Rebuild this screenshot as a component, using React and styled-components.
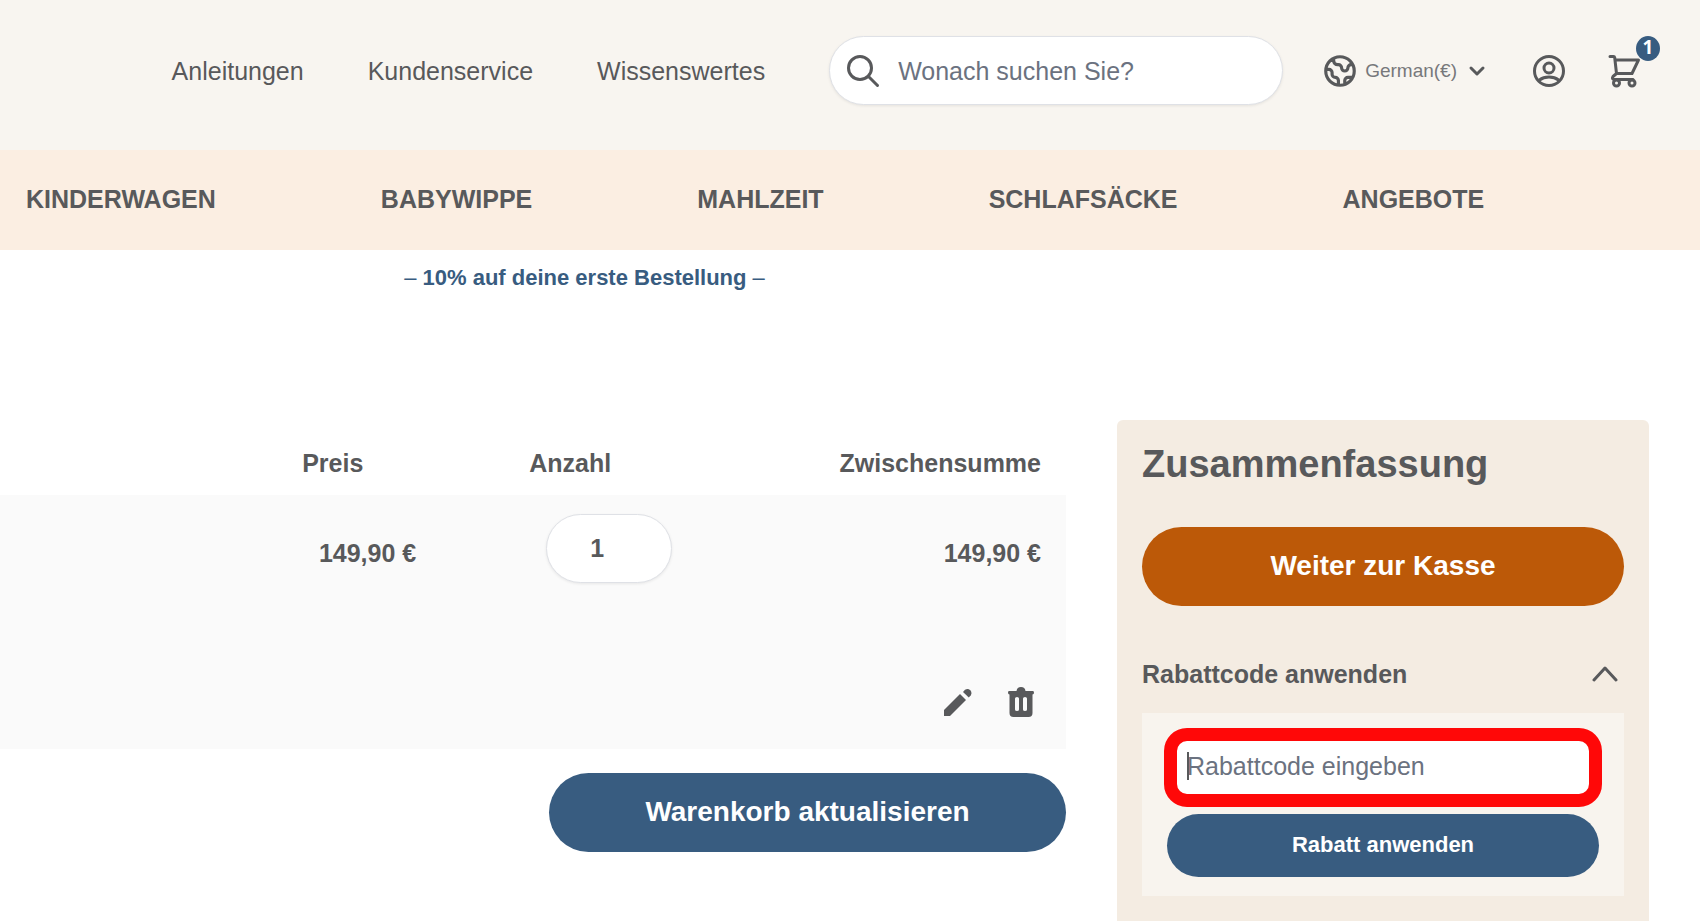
import React from 'react';
import styled, { createGlobalStyle } from 'styled-components';

const color = {
  ink: '#58595b',
  blue: '#385c80',
  orange: '#bc5908',
  placeholder: '#6b7280',
  line: '#dfe1e6',
};

const GlobalStyle = createGlobalStyle`
  *, *::before, *::after { box-sizing: border-box; }
  body {
    margin: 0;
    background: #fff;
    color: ${color.ink};
    font: 400 25px/36px "Liberation Sans", Arial, sans-serif;
  }
  button, input { font: inherit; color: inherit; }
  a { color: inherit; text-decoration: none; }
`;

const Page = styled.div`
  min-height: 100vh;
  display: flex;
  flex-direction: column;
  overflow-x: hidden;
`;

const TopBar = styled.header`
  display: flex;
  align-items: center;
  justify-content: flex-end;
  height: 150px;
  padding: 0 56px 9px 24px;
  background: #f8f5f0;
`;

const ServiceNav = styled.nav`
  display: flex;
  gap: 64px;
  margin-right: 64px;
`;

const SearchBox = styled.label`
  display: flex;
  align-items: center;
  gap: 18px;
  flex: 0 1 454px;
  height: 69px;
  padding: 0 24px 0 16px;
  margin-right: 38px;
  background: #fff;
  border: 1px solid ${color.line};
  border-radius: 35px;
  box-shadow: 0 1px 3px rgba(0, 0, 0, 0.08);
`;

const SearchInput = styled.input`
  flex: 1;
  min-width: 0;
  padding: 0;
  border: 0;
  outline: 0;
  background: transparent;
  &::placeholder { color: ${color.placeholder}; opacity: 1; }
`;

const BareButton = styled.button`
  display: flex;
  align-items: center;
  padding: 0;
  border: 0;
  background: none;
  cursor: pointer;
`;

const LanguageButton = styled(BareButton)`
  gap: 6px;
  margin-right: 41px;
  color: #77787b;
  font-size: 19px;
  svg { color: ${color.ink}; }
  svg:last-child { margin-left: 2px; }
`;

const CartButton = styled(BareButton)`
  position: relative;
  margin-left: 38px;
`;

const Badge = styled.span`
  position: absolute;
  top: -16px;
  right: -16px;
  width: 24px;
  height: 25px;
  border-radius: 50%;
  background: ${color.blue};
  color: #fff;
  font: 700 19px/23px "Open Sans", sans-serif;
  text-align: center;
`;

const CategoryNav = styled.nav`
  display: flex;
  align-items: center;
  gap: 165px;
  height: 100px;
  padding: 0 26px 2px;
  background: #fbeee2;
  font-weight: 700;
  text-transform: uppercase;
`;

const Promo = styled.p`
  width: 69%;
  margin: 10px 0 0;
  padding-right: 4px;
  color: ${color.blue};
  font-size: 22px;
  text-align: center;
`;

const Main = styled.main`
  flex: 1;
  display: flex;
  gap: 51px;
  margin-top: 124px;
  padding-right: 51px;
`;

const Cart = styled.section`
  flex: 1;
  display: flex;
  flex-direction: column;
  align-items: flex-end;
  padding-top: 8px;
`;

const CartTable = styled.table`
  width: 100%;
  table-layout: fixed;
  border-collapse: collapse;
  font-weight: 700;
  margin-bottom: 24px;
  th, td { padding: 0 25px; }
  th { height: 67px; padding-top: 2px; text-align: left; }
  tbody tr { background: #fafafa; }
`;

const Col = styled.col`
  width: ${(p) => p.$width};
`;

const HeadEnd = styled.th`
  &&& { text-align: right; }
`;

const Amount = styled.td`
  height: 138px;
  vertical-align: top;
  text-align: right;
  &&& { padding-top: 40px; padding-right: ${(p) => p.$end || '25px'}; }
`;

const QuantityCell = styled.td`
  vertical-align: top;
  &&& { padding: 19px 0 0 42px; }
`;

const Quantity = styled.input`
  display: block;
  width: 126px;
  height: 69px;
  padding: 0 24px 0 0;
  border: 1px solid ${color.line};
  border-radius: 35px;
  background: #fff;
  box-shadow: 0 1px 3px rgba(0, 0, 0, 0.08);
  text-align: center;
`;

const ActionsCell = styled.td`
  height: 116px;
  vertical-align: top;
`;

const Actions = styled.div`
  display: flex;
  justify-content: flex-end;
  gap: 36px;
  padding: 54px 7px 0 0;
`;

const PillButton = styled.button`
  width: ${(p) => p.$width || '100%'};
  height: ${(p) => (p.$small ? '63px' : '79px')};
  padding: 0 0 2px;
  border: 0;
  border-radius: 40px;
  background: ${(p) => (p.$primary ? color.orange : color.blue)};
  color: #fff;
  font-size: ${(p) => (p.$small ? '22px' : '28px')};
  font-weight: 700;
  cursor: pointer;
`;

const Summary = styled.aside`
  flex: 0 0 532px;
  padding: 22px 25px;
  border-radius: 6px 6px 0 0;
  background: #f4ece2;
`;

const SummaryTitle = styled.h2`
  margin: 0 0 41px;
  font-size: 38px;
  line-height: 44px;
`;

const CouponToggle = styled(BareButton)`
  justify-content: space-between;
  width: 100%;
  margin: 50px 0 21px;
  padding-right: 6px;
  font-weight: 700;
`;

const CouponPanel = styled.form`
  padding: 20px 25px 19px;
  background: #f8f4ee;
`;

const CouponField = styled.div`
  position: relative;
  margin-bottom: 12px;
`;

const CouponInput = styled.input`
  display: block;
  width: 100%;
  height: 69px;
  padding: 0 20px 2px;
  border: 0;
  border-radius: 23px;
  outline: 0;
  background: #fff;
  &::placeholder { color: ${color.placeholder}; opacity: 1; }
`;

const Highlight = styled.span`
  position: absolute;
  inset: -5px -3px;
  border: 13px solid #ff0808;
  border-radius: 23px;
  pointer-events: none;
`;

const Caret = styled.span`
  position: absolute;
  top: 19px;
  left: 20px;
  width: 2px;
  height: 28px;
  background: ${color.ink};
`;

const Stroke = ({ size, box = 24, width = 2, children }) => (
  <svg width={size} height={size} viewBox={`0 0 ${box} ${box}`} fill="none" stroke="currentColor"
    strokeWidth={width} strokeLinecap="round" strokeLinejoin="round" aria-hidden="true">
    {children}
  </svg>
);

const SearchIcon = () => (
  <Stroke size={34} box={34} width={3}>
    <circle cx="14" cy="14" r="11.500" />
    <path d="M22.500 22.500 31.500 31.500" />
  </Stroke>
);

const GlobeIcon = () => (
  <Stroke size={38}>
    <path d="M3.055 11H5a2 2 0 012 2v1a2 2 0 002 2 2 2 0 012 2v2.945M8 3.935V5.500A2.500 2.500 0 0010.500 8h.5a2 2 0 012 2 2 2 0 104 0 2 2 0 012-2h1.064M15 20.488V18a2 2 0 012-2h3.064M21 12a9 9 0 11-18 0 9 9 0 0118 0z" />
  </Stroke>
);

const UserIcon = () => (
  <Stroke size={38} box={38} width={3}>
    <circle cx="19" cy="19" r="14.500" />
    <circle cx="19" cy="16" r="5" />
    <path d="M9.500 28C12 26 15.500 25 19 25S26 26 28.500 28" />
  </Stroke>
);

const CartIcon = () => (
  <Stroke size={38} box={38} width={3}>
    <path d="M4 4.500h3.500q1 0 1.200 1L10.500 21.500H26L32.500 8H9M10.500 21.500l-3.500 3q-1.500 2.500 1 3h19" />
    <circle cx="10.500" cy="31" r="3" />
    <circle cx="26" cy="31" r="3" />
  </Stroke>
);

const PencilIcon = () => (
  <svg width="28" height="28" viewBox="0 0 28 28" fill="currentColor" aria-hidden="true">
    <path d="M0 28v-6L16 6l6 6L6 28z" />
    <path d="M19 4l2-2.200q3-1.800 5.200.4t.6 5L24.800 9.500z" />
  </svg>
);

const TrashIcon = () => (
  <svg width="26" height="30" viewBox="0 0 26 30" fill="currentColor" aria-hidden="true">
    <path fillRule="evenodd" d="M8.500 4q.5-4 4.500-4t4.500 4H25q1 0 1 1.700T24.500 7.500V26q0 4-4 4h-15q-4 0-4-4V7.500Q0 7.500 0 5.700T1 4zM7 11.500v11q0 1.500 2 1.500t2-1.500v-11q0-1.500-2-1.500t-2 1.500zm8 0v11q0 1.500 2 1.500t2-1.500v-11q0-1.500-2-1.500t-2 1.500z" />
  </svg>
);

const categories = ['Kinderwagen', 'Babywippe', 'Mahlzeit', 'Schlafsäcke', 'Angebote'];
const services = ['Anleitungen', 'Kundenservice', 'Wissenswertes'];

export default function App() {
  return (
    <Page>
      <GlobalStyle />
      <TopBar>
        <ServiceNav>
          {services.map((name) => <a href="#" key={name}>{name}</a>)}
        </ServiceNav>
        <SearchBox>
          <SearchIcon />
          <SearchInput type="search" aria-label="Suche" placeholder="Wonach suchen Sie?" />
        </SearchBox>
        <LanguageButton type="button">
          <GlobeIcon />
          German(€)
          <Stroke size={24} width={3}><path d="m6 9 6 6 6-6" /></Stroke>
        </LanguageButton>
        <BareButton type="button" aria-label="Konto"><UserIcon /></BareButton>
        <CartButton type="button" aria-label="Warenkorb">
          <CartIcon />
          <Badge>1</Badge>
        </CartButton>
      </TopBar>
      <CategoryNav>
        {categories.map((name) => <a href="#" key={name}>{name}</a>)}
      </CategoryNav>
      <Promo>– <b>10% auf deine erste Bestellung</b> –</Promo>
      <Main>
        <Cart>
          <CartTable>
            <colgroup>
              <Col $width="26%" />
              <Col $width="21.3%" />
              <Col $width="18%" />
              <Col />
            </colgroup>
            <thead>
              <tr>
                <td />
                <th scope="col">Preis</th>
                <th scope="col">Anzahl</th>
                <HeadEnd scope="col">Zwischensumme</HeadEnd>
              </tr>
            </thead>
            <tbody>
              <tr>
                <td />
                <Amount $end="88px">149,90 €</Amount>
                <QuantityCell><Quantity aria-label="Anzahl" inputMode="numeric" defaultValue="1" /></QuantityCell>
                <Amount>149,90 €</Amount>
              </tr>
              <tr>
                <ActionsCell colSpan={4}>
                  <Actions>
                    <BareButton type="button" aria-label="Bearbeiten"><PencilIcon /></BareButton>
                    <BareButton type="button" aria-label="Entfernen"><TrashIcon /></BareButton>
                  </Actions>
                </ActionsCell>
              </tr>
            </tbody>
          </CartTable>
          <PillButton type="button" $width="517px">Warenkorb aktualisieren</PillButton>
        </Cart>
        <Summary>
          <SummaryTitle>Zusammenfassung</SummaryTitle>
          <PillButton type="button" $primary>Weiter zur Kasse</PillButton>
          <CouponToggle type="button" aria-expanded="true">
            Rabattcode anwenden
            <svg width="26" height="16" viewBox="0 0 26 16" fill="none" stroke="currentColor" strokeWidth="3" strokeLinecap="round" strokeLinejoin="round" aria-hidden="true">
              <path d="M2 14 13 2l11 12" />
            </svg>
          </CouponToggle>
          <CouponPanel onSubmit={(e) => e.preventDefault()}>
            <CouponField>
              <CouponInput type="text" aria-label="Rabattcode" placeholder="Rabattcode eingeben" />
              <Highlight />
              <Caret />
            </CouponField>
            <PillButton $small>Rabatt anwenden</PillButton>
          </CouponPanel>
        </Summary>
      </Main>
    </Page>
  );
}
